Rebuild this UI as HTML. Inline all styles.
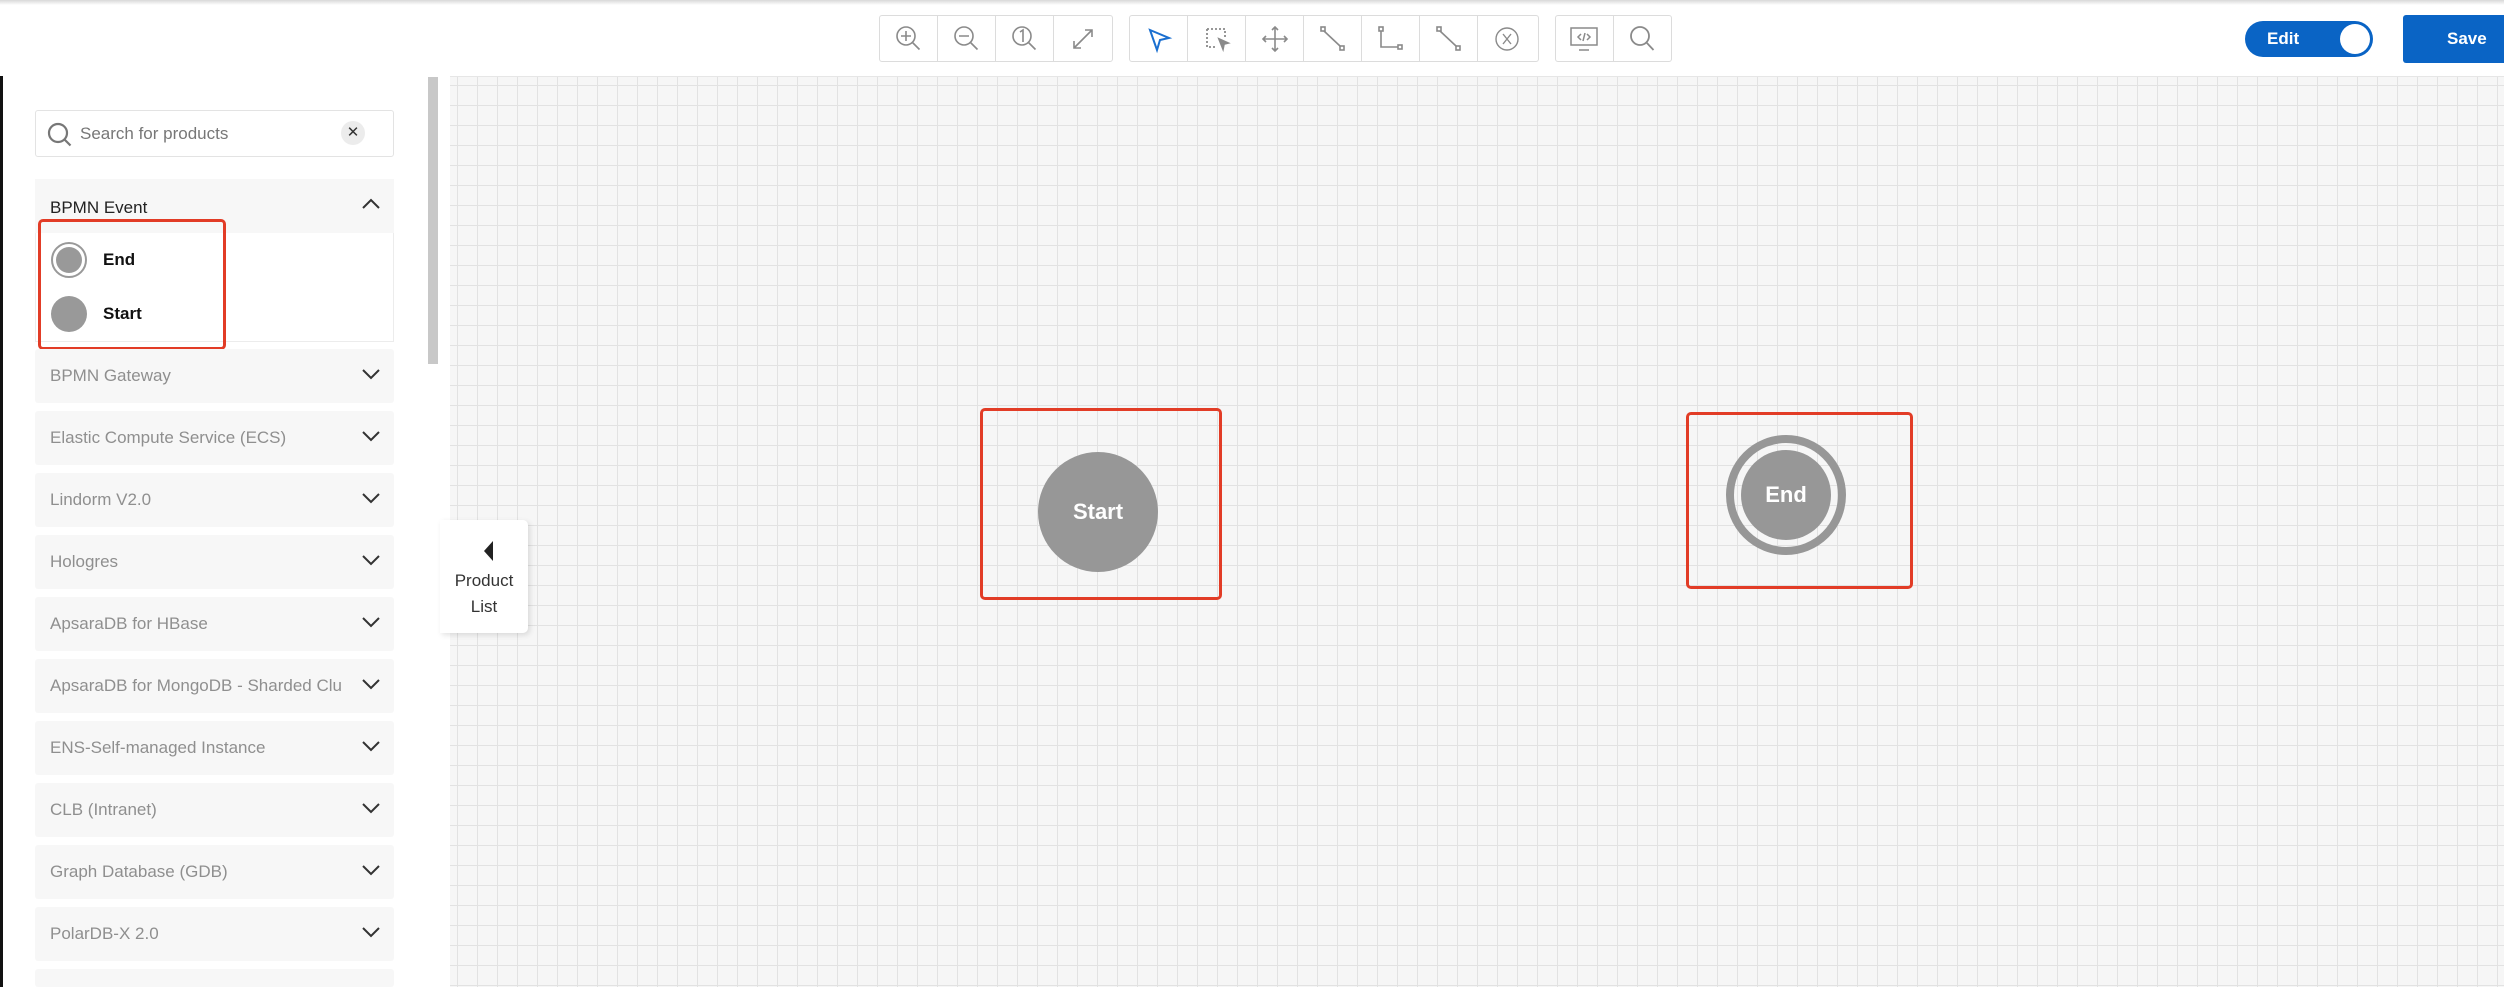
<!DOCTYPE html>
<html style="overflow:hidden;width:2504px;height:987px"><head><meta charset="utf-8"><style>
*{box-sizing:border-box;margin:0;padding:0}
body{width:2504px;height:987px;overflow:hidden;background:#fff;font-family:"Liberation Sans",sans-serif;position:relative}
#wrap{position:absolute;left:0;top:0;width:2504px;height:987px;overflow:hidden}
.topshadow{position:absolute;left:0;top:0;width:2504px;height:5px;background:linear-gradient(#d8d8d8,#fff)}
.canvas{position:absolute;left:450px;top:76px;right:0;bottom:0;background-color:#f6f6f6;
background-image:linear-gradient(to right,#e2e2e2 1px,transparent 1px),linear-gradient(to bottom,#e2e2e2 1px,transparent 1px);
background-size:20px 20px;background-position:7px 8px;border-top:1px solid #e6e6e6}
.grp{position:absolute;top:15px;height:47px;border:1px solid #dcdcdc;border-radius:3px;display:flex;background:#fff}
.grp div{width:58px;height:100%;border-right:1px solid #dcdcdc;display:flex;align-items:center;justify-content:center}
.grp div:last-child{border-right:none}
.side{position:absolute;left:0;top:76px;width:450px;height:911px;border-left:3px solid #111;background:#fff}
.search{position:absolute;left:35px;top:110px;width:359px;height:47px;border:1px solid #e3e3e3;border-radius:3px}
.row{position:absolute;left:35px;width:359px;height:54px;background:#f7f7f7;border-radius:3px;color:#8f8f8f;font-size:17px;line-height:54px;padding-left:15px}
.row svg{position:absolute;left:326px;top:19px}
.red{position:absolute;border:3px solid #e23c26;border-radius:5px}
</style></head><body><div id="wrap">
<div class="topshadow"></div>
<div class="canvas"></div>

<div class="grp" style="left:879px;width:234px">
<div><svg width="30" height="30" viewBox="0 0 30 30" fill="none" stroke="#8a8a8a" stroke-width="1.6"><circle cx="12" cy="12" r="9"/><path d="M18.5 18.5l7 7M12 7v10M7 12h10"/></svg></div>
<div><svg width="30" height="30" viewBox="0 0 30 30" fill="none" stroke="#8a8a8a" stroke-width="1.6"><circle cx="12" cy="12" r="9"/><path d="M18.5 18.5l7 7M7 12h10"/></svg></div>
<div><svg width="30" height="30" viewBox="0 0 30 30" fill="none" stroke="#8a8a8a" stroke-width="1.6"><circle cx="12" cy="12" r="9"/><path d="M18.5 18.5l7 7M10 8l3-2v12"/></svg></div>
<div><svg width="30" height="30" viewBox="0 0 30 30" fill="none" stroke="#8a8a8a" stroke-width="1.6"><path d="M6 24L24 6M17 6h7v7M6 17v7h7"/></svg></div>
</div>
<div class="grp" style="left:1129px;width:410px">
<div><svg width="30" height="30" viewBox="0 0 30 30" fill="none" stroke="#1a6fd0" stroke-width="2"><path d="M6 6l19 8-9 2-3 10z"/></svg></div>
<div><svg width="30" height="30" viewBox="0 0 30 30" fill="none" stroke="#8a8a8a" stroke-width="1.8"><path d="M5 5h18v10M5 5v18h10" stroke-dasharray="2 2"/><path d="M17 15l9 4-4 1-1 5z" fill="#8a8a8a"/></svg></div>
<div><svg width="30" height="30" viewBox="0 0 30 30" fill="none" stroke="#8a8a8a" stroke-width="1.6"><path d="M15 3v24M3 15h24M12 6l3-3 3 3M12 24l3 3 3-3M6 12l-3 3 3 3M24 12l3 3-3 3"/></svg></div>
<div><svg width="30" height="30" viewBox="0 0 30 30" fill="none" stroke="#8a8a8a" stroke-width="1.6"><rect x="3" y="3" width="4" height="4"/><rect x="22" y="22" width="4" height="4"/><path d="M6 7l16 15"/></svg></div>
<div><svg width="30" height="30" viewBox="0 0 30 30" fill="none" stroke="#8a8a8a" stroke-width="1.6"><rect x="3" y="3" width="4" height="4"/><rect x="22" y="21" width="4" height="4"/><path d="M5 7v16h17"/></svg></div>
<div><svg width="30" height="30" viewBox="0 0 30 30" fill="none" stroke="#8a8a8a" stroke-width="1.6"><rect x="3" y="3" width="4" height="4"/><rect x="22" y="22" width="4" height="4"/><path d="M6 7l16 15"/></svg></div>
<div><svg width="30" height="30" viewBox="0 0 30 30" fill="none" stroke="#8a8a8a" stroke-width="1.4"><circle cx="15" cy="15" r="11"/><path d="M11 10l8 10M19 10l-8 10"/></svg></div>
</div>
<div class="grp" style="left:1555px;width:117px">
<div><svg width="32" height="30" viewBox="0 0 32 30" fill="none" stroke="#8a8a8a" stroke-width="1.5"><rect x="3" y="4" width="26" height="17"/><path d="M11 26h10M13 10l-3 3 3 3M19 10l3 3-3 3M17 9l-2 8"/></svg></div>
<div><svg width="30" height="30" viewBox="0 0 30 30" fill="none" stroke="#8a8a8a" stroke-width="1.8"><circle cx="13" cy="12" r="9"/><path d="M19.5 18.5l7 7.5"/></svg></div>
</div>

<div style="position:absolute;left:2245px;top:21px;width:128px;height:36px;border-radius:18px;background:#0a64c5">
<span style="position:absolute;left:22px;top:8px;color:#fff;font-weight:bold;font-size:17px">Edit</span>
<div style="position:absolute;right:3px;top:3px;width:30px;height:30px;border-radius:50%;background:#fff"></div></div>
<div style="position:absolute;left:2403px;top:15px;width:110px;height:48px;border-radius:3px;background:#0a64c5;color:#fff;font-weight:bold;font-size:17px;line-height:48px;padding-left:44px">Save</div>

<div class="side"></div>
<div class="search">
<svg style="position:absolute;left:10px;top:10px" width="28" height="28" viewBox="0 0 28 28" fill="none" stroke="#777" stroke-width="2.2"><circle cx="12" cy="12" r="9"/><path d="M18.5 18.5l6 6"/></svg>
<span style="position:absolute;left:44px;top:13px;font-size:17px;color:#777">Search for products</span>
<div style="position:absolute;left:305px;top:10px;width:24px;height:24px;border-radius:50%;background:#ececec;text-align:center;line-height:24px;font-size:15px;color:#333">✕</div>
</div>
<div style="position:absolute;left:35px;top:179px;width:359px;height:54px;background:#f7f7f7;font-size:17px;color:#222;padding:19px 0 0 15px">BPMN Event
<svg style="position:absolute;left:326px;top:18px" width="20" height="12" viewBox="0 0 20 12" fill="none" stroke="#333" stroke-width="2"><path d="M2 11l8-8 8 8"/></svg></div>
<div style="position:absolute;left:35px;top:233px;width:359px;height:109px;border:1px solid #ececec;border-top:none;background:#fff"></div>
<div style="position:absolute;left:51px;top:242px;width:36px;height:36px;border-radius:50%;border:2px solid #999;background:#fff"><div style="margin:3px;width:26px;height:26px;border-radius:50%;background:#999"></div></div>
<div style="position:absolute;left:103px;top:250px;font-size:17px;font-weight:bold;color:#111">End</div>
<div style="position:absolute;left:51px;top:296px;width:36px;height:36px;border-radius:50%;background:#999"></div>
<div style="position:absolute;left:103px;top:304px;font-size:17px;font-weight:bold;color:#111">Start</div>
<div class="red" style="left:38px;top:219px;width:188px;height:131px"></div>

<div class="row" style="top:349px">BPMN Gateway<svg width="20" height="12" viewBox="0 0 20 12" fill="none" stroke="#333" stroke-width="2"><path d="M2 2l8 8 8-8"/></svg></div>
<div class="row" style="top:411px">Elastic Compute Service (ECS)<svg width="20" height="12" viewBox="0 0 20 12" fill="none" stroke="#333" stroke-width="2"><path d="M2 2l8 8 8-8"/></svg></div>
<div class="row" style="top:473px">Lindorm V2.0<svg width="20" height="12" viewBox="0 0 20 12" fill="none" stroke="#333" stroke-width="2"><path d="M2 2l8 8 8-8"/></svg></div>
<div class="row" style="top:535px">Hologres<svg width="20" height="12" viewBox="0 0 20 12" fill="none" stroke="#333" stroke-width="2"><path d="M2 2l8 8 8-8"/></svg></div>
<div class="row" style="top:597px">ApsaraDB for HBase<svg width="20" height="12" viewBox="0 0 20 12" fill="none" stroke="#333" stroke-width="2"><path d="M2 2l8 8 8-8"/></svg></div>
<div class="row" style="top:659px;white-space:nowrap;overflow:hidden">ApsaraDB for MongoDB - Sharded Clu<svg width="20" height="12" viewBox="0 0 20 12" fill="none" stroke="#333" stroke-width="2"><path d="M2 2l8 8 8-8"/></svg></div>
<div class="row" style="top:721px">ENS-Self-managed Instance<svg width="20" height="12" viewBox="0 0 20 12" fill="none" stroke="#333" stroke-width="2"><path d="M2 2l8 8 8-8"/></svg></div>
<div class="row" style="top:783px">CLB (Intranet)<svg width="20" height="12" viewBox="0 0 20 12" fill="none" stroke="#333" stroke-width="2"><path d="M2 2l8 8 8-8"/></svg></div>
<div class="row" style="top:845px">Graph Database (GDB)<svg width="20" height="12" viewBox="0 0 20 12" fill="none" stroke="#333" stroke-width="2"><path d="M2 2l8 8 8-8"/></svg></div>
<div class="row" style="top:907px">PolarDB-X 2.0<svg width="20" height="12" viewBox="0 0 20 12" fill="none" stroke="#333" stroke-width="2"><path d="M2 2l8 8 8-8"/></svg></div>
<div class="row" style="top:969px;height:18px"></div>
<div style="position:absolute;left:428px;top:77px;width:10px;height:287px;background:#c8c8c8"></div>

<div style="position:absolute;left:440px;top:520px;width:88px;height:113px;background:#fff;border-radius:0 5px 5px 0;box-shadow:2px 2px 6px rgba(0,0,0,.12);text-align:center;font-size:17px;color:#333;line-height:26px;padding-top:48px">Product<br>List</div>
<div style="position:absolute;left:484px;top:541px;width:0;height:0;border-top:10px solid transparent;border-bottom:10px solid transparent;border-right:9px solid #222"></div>

<div style="position:absolute;left:1038px;top:452px;width:120px;height:120px;border-radius:50%;background:#979797;color:#fff;font-weight:bold;font-size:22px;line-height:120px;text-align:center">Start</div>
<div class="red" style="left:980px;top:408px;width:242px;height:192px"></div>
<div style="position:absolute;left:1726px;top:435px;width:120px;height:120px;border-radius:50%;border:8px solid #979797"></div>
<div style="position:absolute;left:1741px;top:450px;width:90px;height:90px;border-radius:50%;background:#979797;color:#fff;font-weight:bold;font-size:22px;line-height:90px;text-align:center">End</div>
<div class="red" style="left:1686px;top:412px;width:227px;height:177px"></div>
</div></body></html>
